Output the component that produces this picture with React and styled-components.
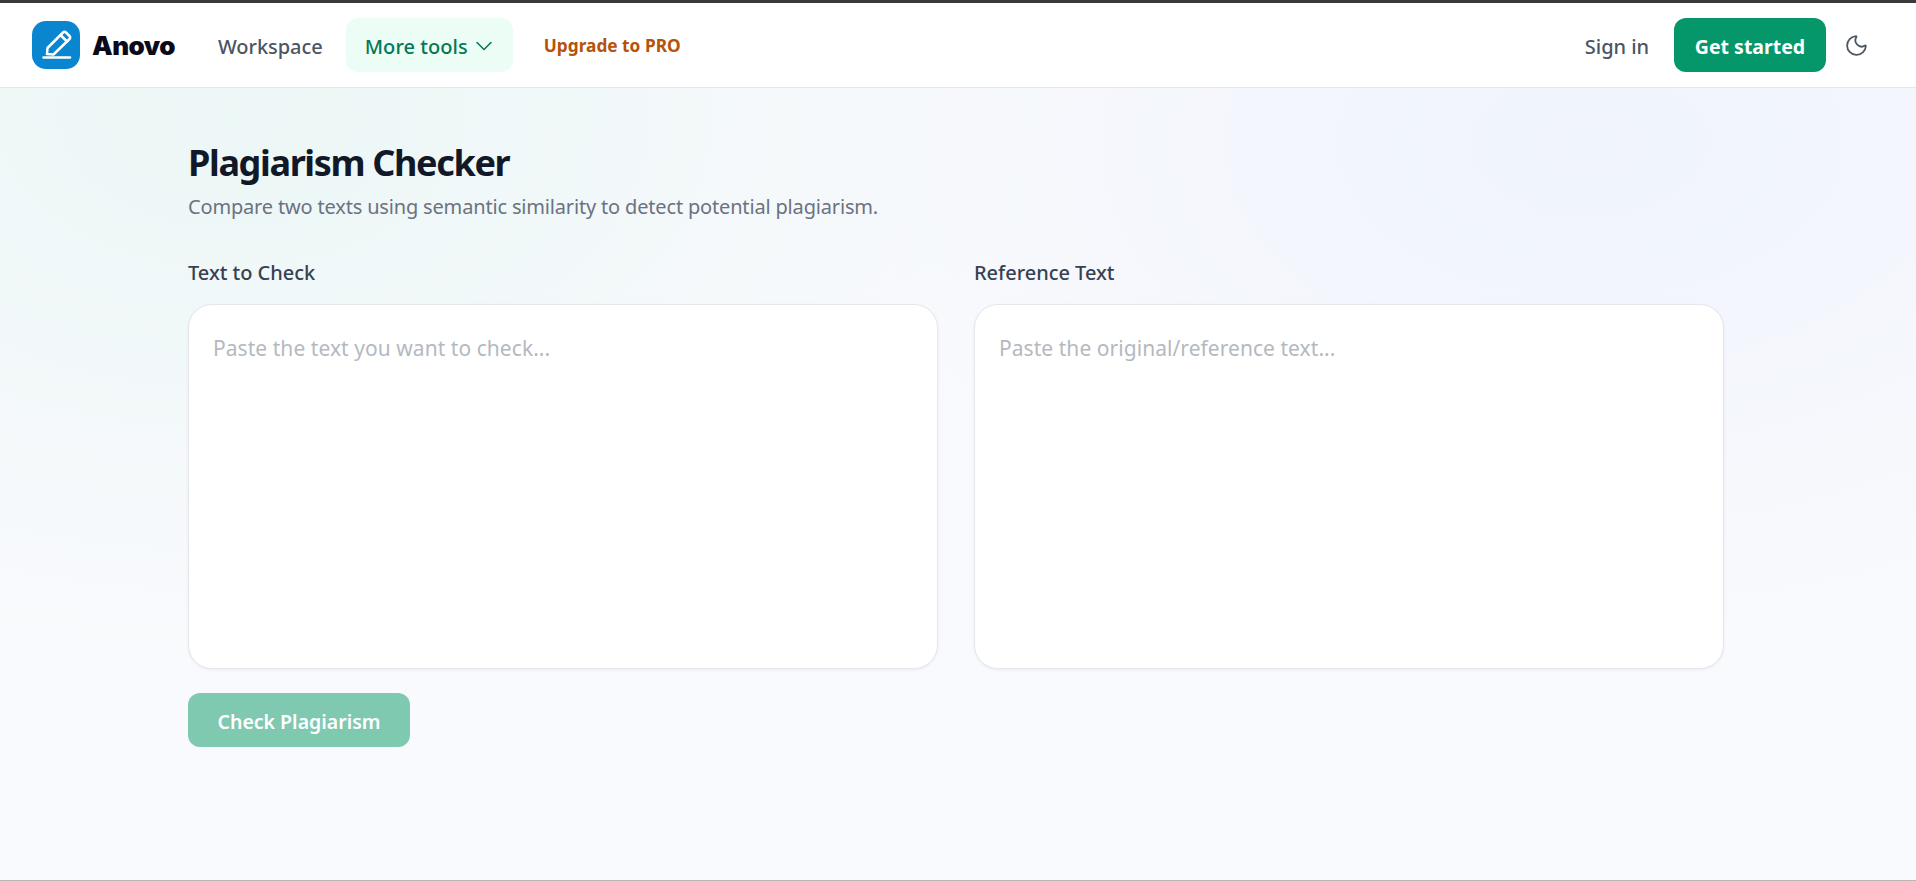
import React from "react";
import styled, { createGlobalStyle } from "styled-components";
import { ChevronDown, Moon } from "lucide-react";

const GlobalStyle = createGlobalStyle`
  * { box-sizing: border-box; }
  html, body { margin: 0; padding: 0; height: 100%; }
  body {
    font-family: "Noto Sans", "Open Sans", sans-serif;
    background: #f9fafd;
    overflow: hidden;
  }
`;

const Page = styled.div`
  height: 881px;
  display: flex;
  flex-direction: column;
  border-top: 3px solid #3a3a3a;
  border-bottom: 1px solid #b9b6b6;
  background:
    radial-gradient(820px 540px at 230px 110px, rgba(214, 241, 234, 0.38), rgba(214, 241, 234, 0) 100%),
    radial-gradient(800px 500px at 1590px 140px, rgba(224, 233, 251, 0.38), rgba(224, 233, 251, 0) 100%),
    #f9fafd;
`;

const Header = styled.header`
  height: 85px;
  flex: none;
  display: flex;
  align-items: center;
  justify-content: space-between;
  padding: 0 47px 0 32px;
  background: #fff;
  border-bottom: 1px solid #e5e7eb;
`;

const NavGroup = styled.div`
  display: flex;
  align-items: center;
`;

const LogoBadge = styled.div`
  width: 48px;
  height: 48px;
  border-radius: 14px;
  background: #0a85cf;
`;

const Brand = styled.span`
  width: 84px;
  margin: 0 42px 0 12px;
  font-family: Inter, sans-serif;
  font-size: 26px;
  font-weight: 900;
  letter-spacing: -0.5px;
  color: #0a0a1a;
`;

const NavLink = styled.a`
  padding-top: 2px;
  font-size: 20px;
  font-weight: 500;
  letter-spacing: -0.05px;
  color: #4b5563;
`;

const Pill = styled.button`
  height: 54px;
  margin: 0 31px 0 23px;
  padding: 2px 15px 0 19px;
  display: flex;
  align-items: center;
  gap: 2px;
  border: 0;
  border-radius: 12px;
  background: #ecfdf5;
  color: #047857;
  font: 500 20px "Noto Sans", sans-serif;
  letter-spacing: 0.05px;
`;

const Upgrade = styled.a`
  font-size: 17.3px;
  font-weight: 700;
  color: #b45309;
`;

const GetStarted = styled.button`
  height: 54px;
  width: 152px;
  margin: 0 18px 0 25px;
  padding: 2px 0 0;
  border: 0;
  border-radius: 12px;
  background: #059669;
  color: #fff;
  font: 700 19.5px "Noto Sans", sans-serif;
`;

const Main = styled.main`
  padding: 53px 192px 0 188px;
`;

const Title = styled.h1`
  margin: 0;
  font-size: 36px;
  line-height: 44px;
  font-weight: 700;
  letter-spacing: -1.35px;
  color: #111827;
`;

const Subtitle = styled.p`
  margin: 8px 0 0;
  font-size: 20px;
  line-height: 28px;
  letter-spacing: -0.17px;
  color: #6b7280;
`;

const Columns = styled.div`
  margin-top: 38px;
  display: grid;
  grid-template-columns: 1fr 1fr;
  gap: 36px;
`;

const Field = styled.label`
  display: flex;
  flex-direction: column;
  gap: 17px;
`;

const FieldLabel = styled.span`
  font-size: 20px;
  line-height: 28px;
  font-weight: 500;
  letter-spacing: -0.02px;
  color: #374151;
`;

const TextBox = styled.textarea`
  height: 365px;
  padding: 27px 24px;
  resize: none;
  outline: none;
  border: 1px solid #e5e7eb;
  border-radius: 24px;
  background: #fff;
  box-shadow: 0 1px 3px rgba(0, 0, 0, 0.06);
  font: 400 21px/32px "Noto Sans", sans-serif;
  letter-spacing: 0.05px;
  &::placeholder { color: #b4b9c0; opacity: 1; }
`;

const CheckButton = styled.button`
  display: block;
  width: 222px;
  height: 54px;
  margin-top: 24px;
  padding: 2px 0 0;
  border: 0;
  border-radius: 12px;
  background: #80c9b1;
  color: #fff;
  font: 600 19.5px "Noto Sans", sans-serif;
`;

const PencilLogo = () => (
  <svg width="48" height="48" viewBox="0 0 48 48" fill="none" stroke="#fff" strokeWidth="2.5" strokeLinecap="round" strokeLinejoin="round">
    <path d="M11.5 36.5H38" />
    <path d="M15 33l.5-6L31 11.5q1.5-1.5 3 0l3.5 3.5q1.5 1.5 0 3L21.5 33.5z" />
    <path d="M28.5 14l6.5 6.5" />
  </svg>
);

export default function App() {
  return (
    <>
      <GlobalStyle />
      <Page>
        <Header>
          <NavGroup>
            <LogoBadge><PencilLogo /></LogoBadge>
            <Brand>Anovo</Brand>
            <NavLink>Workspace</NavLink>
            <Pill>More tools <ChevronDown size={28} strokeWidth={1.3} /></Pill>
            <Upgrade>Upgrade to PRO</Upgrade>
          </NavGroup>
          <NavGroup>
            <NavLink>Sign in</NavLink>
            <GetStarted>Get started</GetStarted>
            <Moon size={25} color="#4b5563" strokeWidth={1.7} />
          </NavGroup>
        </Header>
        <Main>
          <Title>Plagiarism Checker</Title>
          <Subtitle>Compare two texts using semantic similarity to detect potential plagiarism.</Subtitle>
          <Columns>
            <Field>
              <FieldLabel>Text to Check</FieldLabel>
              <TextBox placeholder="Paste the text you want to check..." />
            </Field>
            <Field>
              <FieldLabel>Reference Text</FieldLabel>
              <TextBox placeholder="Paste the original/reference text..." />
            </Field>
          </Columns>
          <CheckButton>Check Plagiarism</CheckButton>
        </Main>
      </Page>
    </>
  );
}
